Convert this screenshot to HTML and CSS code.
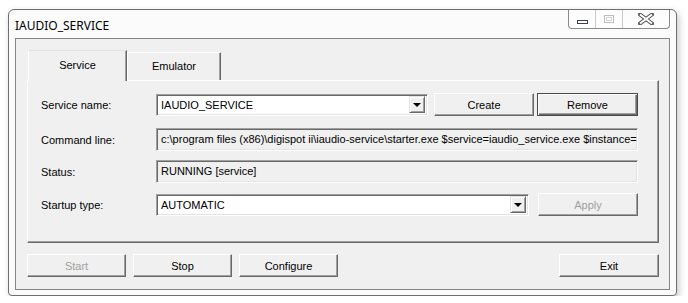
FILE: index.html
```html
<!DOCTYPE html>
<html lang="en">
<head>
  <meta charset="UTF-8" />
  <title>IAUDIO_SERVICE</title>
  <link rel="stylesheet" href="styles.css">
</head>
<body>
  <div class="window">
    <div class="titlebar">
      <span class="title">IAUDIO_SERVICE</span>
      <div class="caption-btns">
        <div class="cap cap-min"><span class="min-glyph"></span></div>
        <div class="cap cap-max"><span class="max-glyph"></span></div>
        <div class="cap cap-close">
          <svg width="16" height="12" viewBox="0 0 16 12">
            <path d="M2 1.5 L14 10.5 M14 1.5 L2 10.5" stroke="#5a5a5a" stroke-width="4" stroke-linecap="square" fill="none"/>
            <path d="M2 1.5 L14 10.5 M14 1.5 L2 10.5" stroke="#fff" stroke-width="2" stroke-linecap="butt" fill="none"/>
          </svg>
        </div>
      </div>
    </div>

    <div class="client">
      <div class="tabs">
        <div class="tab tab-active">Service</div>
        <div class="tab">Emulator</div>
      </div>

      <div class="panel">
        <div class="row row-first">
          <div class="lbl">Service name:</div>
          <div class="combo combo-name">
            <span class="combo-text">IAUDIO_SERVICE</span>
            <span class="combo-arrow"><span class="tri"></span></span>
          </div>
          <button class="btn btn-create">Create</button>
          <button class="btn btn-default btn-remove">Remove</button>
        </div>

        <div class="row">
          <div class="lbl">Command line:</div>
          <div class="field">c:\program files (x86)\digispot ii\iaudio-service\starter.exe $service=iaudio_service.exe $instance=</div>
        </div>

        <div class="row">
          <div class="lbl">Status:</div>
          <div class="field">RUNNING [service]</div>
        </div>

        <div class="row row-last">
          <div class="lbl">Startup type:</div>
          <div class="combo combo-startup">
            <span class="combo-text">AUTOMATIC</span>
            <span class="combo-arrow"><span class="tri"></span></span>
          </div>
          <button class="btn btn-apply" disabled>Apply</button>
        </div>
      </div>

      <div class="bottom-bar">
        <button class="btn" disabled>Start</button>
        <button class="btn">Stop</button>
        <button class="btn">Configure</button>
        <button class="btn btn-exit">Exit</button>
      </div>
    </div>
  </div>
</body>
</html>
```

FILE: styles.css
```css
* {
  box-sizing: border-box;
  margin: 0;
  padding: 0;
}

body {
  background-color: #fff;
  font-family: 'Liberation Sans', Arial, sans-serif;
  font-size: 11px;
  color: #000;
}

.window {
  width: 669px;
  height: 287px;
  margin: 9px 0 0 8px;
  border: 1px solid #6f6f6f;
  border-radius: 6px 6px 4px 4px;
  background-color: #fbfbfb;
  box-shadow: 2px 3px 7px rgba(0,0,0,0.22);
  display: flex;
  flex-direction: column;
}

/* title bar */

.titlebar {
  height: 28px;
  display: flex;
  justify-content: space-between;
  align-items: flex-start;
}

.title {
  font-family: 'Noto Sans', sans-serif;
  font-size: 12px;
  padding: 9px 0 0 6px;
  line-height: 14px;
}

.caption-btns {
  display: flex;
  height: 19px;
  margin-right: 6px;
  border: 1px solid #8a8a8a;
  border-top: none;
  border-radius: 0 0 4px 4px;
  background-color: #fdfdfd;
}

.cap {
  display: flex;
  align-items: center;
  justify-content: center;
}

.cap-min {
  width: 27px;
  border-right: 1px solid #c9c9c9;
}

.cap-max {
  width: 27px;
  border-right: 1px solid #c9c9c9;
}

.cap-close {
  width: 46px;
}

.min-glyph {
  width: 11px;
  height: 4px;
  margin-top: 5px;
  border: 1px solid #3b4150;
  background: #fff;
}

.max-glyph {
  width: 10px;
  height: 8px;
  border: 1px solid #bdbdbd;
  box-shadow: inset 0 0 0 1px #fff, inset 0 0 0 2px #d5d5d5;
}

/* client area */

.client {
  flex: 1;
  margin: 0 6px 5px 6px;
  border: 1px solid #858585;
  background-color: #f0f0f0;
  padding: 11px 10px 0 11px;
  display: flex;
  flex-direction: column;
}

.tabs {
  display: flex;
  align-items: flex-end;
  height: 30px;
  padding-left: 1px;
}

.tab {
  width: 94px;
  height: 28px;
  border: 1px solid #fff;
  border-bottom: none;
  border-right: 1px solid #696969;
  box-shadow: inset -1px 0 0 #a0a0a0;
  text-align: center;
  line-height: 27px;
  background-color: #f0f0f0;
}

.tab-active {
  width: 99px;
  height: 31px;
  margin-bottom: -1px;
  line-height: 28px;
  position: relative;
  z-index: 1;
  border-top-color: #e3e3e3;
  border-left-color: #fff;
}

.panel {
  height: 163px;
  border: 1px solid;
  border-color: #fff #696969 #696969 #fff;
  box-shadow: inset -1px -1px 0 #a0a0a0;
  padding: 12px 20px 0 13px;
  display: flex;
  flex-direction: column;
  gap: 9px;
}

.row {
  display: flex;
  align-items: center;
  height: 23px;
}

.row-first {
  margin-bottom: 3px;
}

.row-last {
  margin-top: 1px;
}

.lbl {
  width: 115px;
  flex-shrink: 0;
}

.field {
  flex: 1;
  height: 23px;
  border: 1px solid;
  border-color: #a0a0a0 #fff #fff #a0a0a0;
  box-shadow: inset 1px 1px 0 #696969, inset -1px -1px 0 #e3e3e3;
  padding: 0 4px;
  line-height: 21px;
  white-space: nowrap;
  overflow: hidden;
}

.combo {
  height: 22px;
  display: flex;
  align-items: center;
  background-color: #fff;
  border: 1px solid;
  border-color: #a0a0a0 #fff #fff #a0a0a0;
  box-shadow: inset 1px 1px 0 #696969, inset -1px -1px 0 #e3e3e3;
  padding: 2px 2px 2px 3px;
}

.combo-name {
  width: 272px;
}

.combo-startup {
  flex: 1;
}

.combo-text {
  flex: 1;
  padding-left: 1px;
}

.combo-arrow {
  width: 16px;
  height: 17px;
  background-color: #f0f0f0;
  border: 1px solid;
  border-color: #e3e3e3 #696969 #696969 #e3e3e3;
  box-shadow: inset 1px 1px 0 #fff, inset -1px -1px 0 #a0a0a0;
  display: flex;
  align-items: center;
  justify-content: center;
}

.tri {
  width: 0;
  height: 0;
  border-left: 4px solid transparent;
  border-right: 4px solid transparent;
  border-top: 4px solid #000;
  margin-top: 1px;
}

/* buttons */

.btn {
  width: 99px;
  height: 23px;
  font-family: 'Liberation Sans', Arial, sans-serif;
  font-size: 11px;
  color: #000;
  background-color: #f0f0f0;
  border: 1px solid;
  border-color: #fff #696969 #696969 #fff;
  box-shadow: inset -1px -1px 0 #a0a0a0;
}

.btn:disabled {
  color: #a0a0a0;
}

.btn-default {
  border-color: #4a4a4a;
  box-shadow: inset 1px 1px 0 #fff, inset -1px -1px 0 #696969, inset -2px -2px 0 #a0a0a0;
}

.btn-create {
  width: 100px;
  margin-left: 6px;
}

.btn-remove {
  width: 101px;
  margin-left: auto;
}

.btn-apply {
  width: 100px;
  margin-left: 9px;
}

.bottom-bar {
  display: flex;
  gap: 7px;
  margin-top: 11px;
}

.btn-exit {
  width: 100px;
  margin-left: auto;
}
```
